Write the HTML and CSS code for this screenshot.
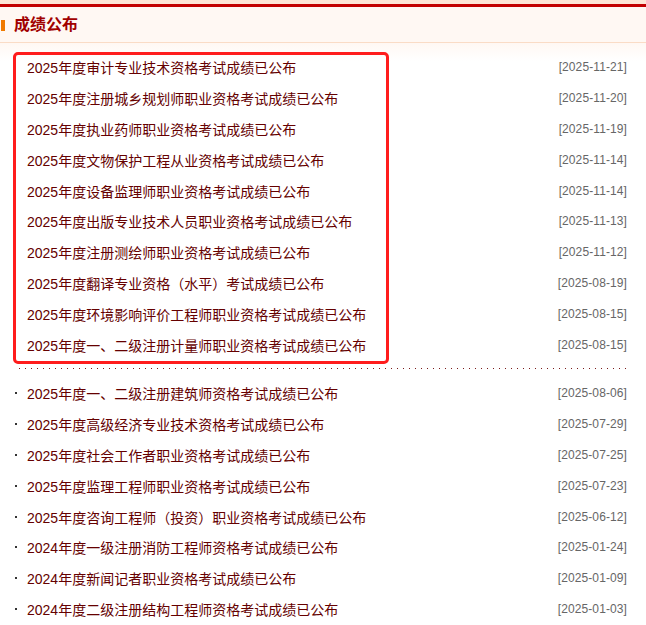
FILE: index.html
```html
<!DOCTYPE html>
<html lang="zh-CN">
<head>
<meta charset="utf-8">
<title>成绩公布</title>
<link rel="stylesheet" href="styles.css">
</head>
<body>
<div class="panel">
  <div class="header">
    <div class="header-inner">
      <span class="marker"></span>
      <h2 class="title">成绩公布</h2>
    </div>
  </div>
  <div class="list">
    <div class="highlight"></div>
    <ul class="group">
      <li class="row"><span class="dot"></span><a class="name">2025年度审计专业技术资格考试成绩已公布</a><span class="date">[2025-11-21]</span></li>
      <li class="row"><span class="dot"></span><a class="name">2025年度注册城乡规划师职业资格考试成绩已公布</a><span class="date">[2025-11-20]</span></li>
      <li class="row"><span class="dot"></span><a class="name">2025年度执业药师职业资格考试成绩已公布</a><span class="date">[2025-11-19]</span></li>
      <li class="row"><span class="dot"></span><a class="name">2025年度文物保护工程从业资格考试成绩已公布</a><span class="date">[2025-11-14]</span></li>
      <li class="row"><span class="dot"></span><a class="name">2025年度设备监理师职业资格考试成绩已公布</a><span class="date">[2025-11-14]</span></li>
      <li class="row"><span class="dot"></span><a class="name">2025年度出版专业技术人员职业资格考试成绩已公布</a><span class="date">[2025-11-13]</span></li>
      <li class="row"><span class="dot"></span><a class="name">2025年度注册测绘师职业资格考试成绩已公布</a><span class="date">[2025-11-12]</span></li>
      <li class="row"><span class="dot"></span><a class="name">2025年度翻译专业资格（水平）考试成绩已公布</a><span class="date">[2025-08-19]</span></li>
      <li class="row"><span class="dot"></span><a class="name">2025年度环境影响评价工程师职业资格考试成绩已公布</a><span class="date">[2025-08-15]</span></li>
      <li class="row"><span class="dot"></span><a class="name">2025年度一、二级注册计量师职业资格考试成绩已公布</a><span class="date">[2025-08-15]</span></li>
    </ul>
    <div class="sep"></div>
    <ul class="group bulleted">
      <li class="row"><span class="dot"></span><a class="name">2025年度一、二级注册建筑师资格考试成绩已公布</a><span class="date">[2025-08-06]</span></li>
      <li class="row"><span class="dot"></span><a class="name">2025年度高级经济专业技术资格考试成绩已公布</a><span class="date">[2025-07-29]</span></li>
      <li class="row"><span class="dot"></span><a class="name">2025年度社会工作者职业资格考试成绩已公布</a><span class="date">[2025-07-25]</span></li>
      <li class="row"><span class="dot"></span><a class="name">2025年度监理工程师职业资格考试成绩已公布</a><span class="date">[2025-07-23]</span></li>
      <li class="row"><span class="dot"></span><a class="name">2025年度咨询工程师（投资）职业资格考试成绩已公布</a><span class="date">[2025-06-12]</span></li>
      <li class="row"><span class="dot"></span><a class="name">2024年度一级注册消防工程师资格考试成绩已公布</a><span class="date">[2025-01-24]</span></li>
      <li class="row"><span class="dot"></span><a class="name">2024年度新闻记者职业资格考试成绩已公布</a><span class="date">[2025-01-09]</span></li>
      <li class="row"><span class="dot"></span><a class="name">2024年度二级注册结构工程师资格考试成绩已公布</a><span class="date">[2025-01-03]</span></li>
    </ul>
  </div>
</div>
</body>
</html>
```

FILE: styles.css
```css
html, body {
  margin: 0;
  padding: 0;
  background: #ffffff;
}

.panel {
  width: 646px;
  font-family: "Liberation Sans", "Noto Sans CJK SC", sans-serif;
}

.header {
  border-top: 4px solid #fde6d6;
}

.header-inner {
  border-top: 3px solid #c20000;
  background: #fff8f3;
  height: 35px;
  border-bottom: 1px solid #fadcc6;
  display: flex;
  align-items: center;
}

.marker {
  width: 4px;
  height: 11px;
  margin-left: 1px;
  margin-top: 1px;
  background: #f07a00;
}

.title {
  margin: 0 0 0 9px;
  font-size: 16px;
  font-weight: bold;
  color: #a10000;
  line-height: 20px;
}

.list {
  position: relative;
  padding-top: 9px;
  background: linear-gradient(to bottom, #fff8f3 0, #ffffff 18px);
}

.highlight {
  position: absolute;
  left: 13px;
  top: 9px;
  width: 370px;
  height: 306px;
  border: 3px solid #ff1c1c;
  border-radius: 5px;
  pointer-events: none;
}

.group {
  list-style: none;
  margin: 0;
  padding: 0;
}

.row {
  display: flex;
  align-items: center;
  height: 30.8px;
  padding: 0 19px 0 15px;
}

.dot {
  width: 12px;
  flex: none;
  display: flex;
  align-items: center;
}

.bulleted .dot::before {
  content: "";
  width: 2px;
  height: 2px;
  background: #333333;
}

.name {
  flex: 1;
  font-size: 14px;
  color: #650000;
  white-space: nowrap;
}

.date {
  font-size: 12px;
  color: #666666;
  letter-spacing: 0.1px;
}

.sep {
  height: 1px;
  margin: 8px 19px 9px 19px;
  background: repeating-linear-gradient(to right, #7a1a1a 0, #7a1a1a 1px, transparent 1px, transparent 6px);
}
```
